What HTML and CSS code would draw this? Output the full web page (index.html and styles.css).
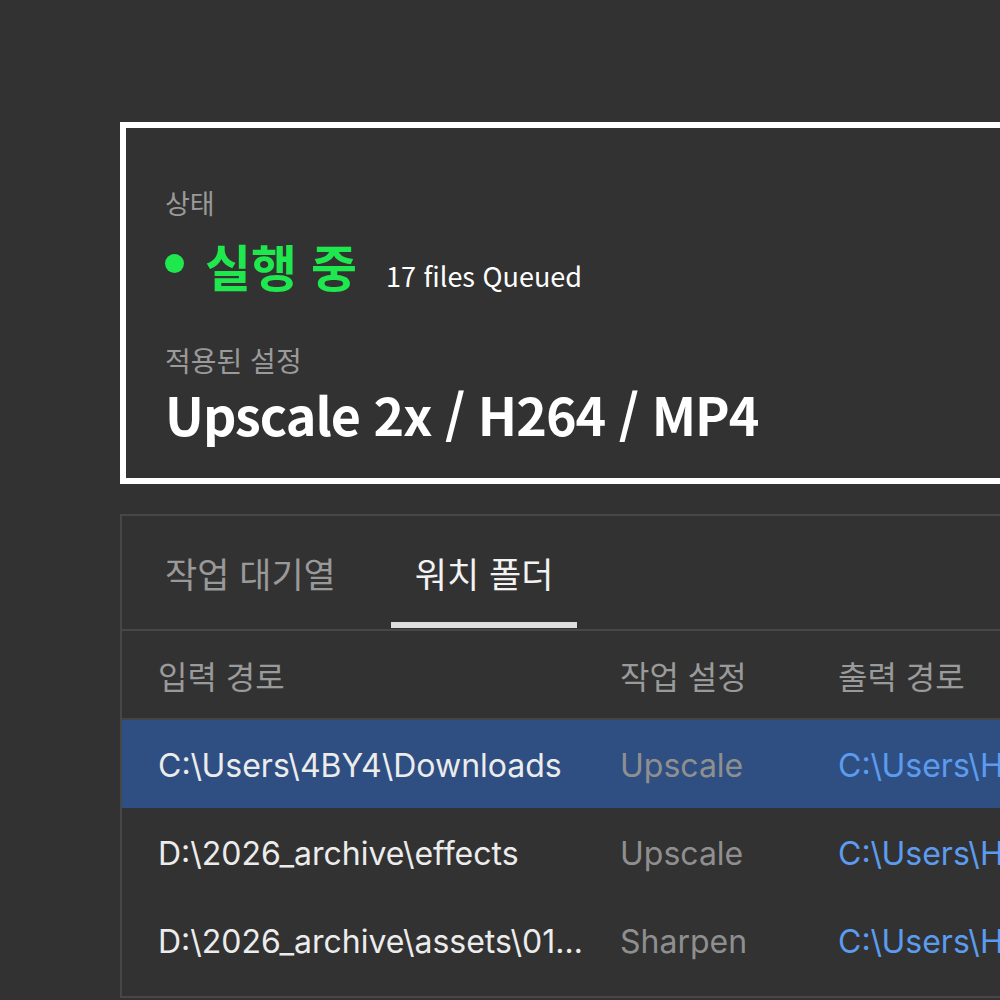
FILE: index.html
```html
<!DOCTYPE html>
<html lang="ko">
<head>
<meta charset="utf-8">
<title>워치 폴더</title>
<link rel="stylesheet" href="styles.css">
</head>
<body>
<main class="page">
  <section class="status-card">
    <div class="label">상태</div>
    <div class="status-line">
      <span class="status-dot"></span>
      <span class="status-text">실행 중</span>
      <span class="queued">17 files Queued</span>
    </div>
    <div class="label label-gap">적용된 설정</div>
    <div class="preset">Upscale 2x / H264 / MP4</div>
  </section>

  <section class="panel">
    <nav class="tabs">
      <div class="tab">작업 대기열</div>
      <div class="tab tab-active">워치 폴더</div>
    </nav>
    <div class="table">
      <div class="row head">
        <div class="cell">입력 경로</div>
        <div class="cell">작업 설정</div>
        <div class="cell">출력 경로</div>
      </div>
      <div class="row selected">
        <div class="cell path">C:\Users\4BY4\Downloads</div>
        <div class="cell op">Upscale</div>
        <div class="cell out">C:\Users\HBY4\Videos\Output</div>
      </div>
      <div class="row">
        <div class="cell path">D:\2026_archive\effects</div>
        <div class="cell op">Upscale</div>
        <div class="cell out">C:\Users\HBY4\Videos\Output</div>
      </div>
      <div class="row">
        <div class="cell path">D:\2026_archive\assets\01_raw_footage</div>
        <div class="cell op">Sharpen</div>
        <div class="cell out">C:\Users\HBY4\Videos\Output</div>
      </div>
    </div>
  </section>
</main>
</body>
</html>
```

FILE: styles.css
```css
html, body {
  margin: 0;
  padding: 0;
  overflow: hidden;
  background: #323232;
}

body {
  width: 1000px;
  height: 1000px;
  font-family: "Noto Sans CJK KR", "Noto Sans", sans-serif;
  color: #ffffff;
}

.page {
  padding: 122px 0 0 120px;
  width: 1100px;
  display: flex;
  flex-direction: column;
  gap: 30px;
}

/* status summary card */
.status-card {
  border: 6px solid #ffffff;
  padding: 60px 0 0 39px;
  box-sizing: border-box;
  height: 362px;
  display: flex;
  flex-direction: column;
}

.label {
  font-size: 27px;
  line-height: 30px;
  color: #9a9a9a;
}

.label-gap {
  font-size: 28px;
  margin-top: 51px;
}

.status-line {
  display: flex;
  align-items: baseline;
  margin-top: 18px;
  height: 58px;
}

.status-dot {
  width: 19px;
  height: 19px;
  border-radius: 50%;
  background: #1fe84e;
  margin-right: 21px;
  align-self: center;
  margin-top: -4px;
}

.status-text {
  font-size: 50px;
  font-weight: 700;
  line-height: 58px;
  color: #1fe84e;
}

.queued {
  font-size: 27px;
  margin-left: 29px;
  color: #ffffff;
}

.preset {
  margin-top: 6px;
  font-size: 52px;
  font-weight: 700;
  line-height: 66px;
  letter-spacing: -1px;
  color: #ffffff;
}

/* tabbed table panel */
.panel {
  border: 2px solid #474747;
  border-right: none;
  height: 484px;
  box-sizing: border-box;
}

.tabs {
  display: flex;
  gap: 31px;
  padding-left: 19px;
  height: 113px;
  border-bottom: 2px solid #474747;
}

.tab {
  display: flex;
  align-items: center;
  padding: 0 24px;
  font-size: 35px;
  color: #999999;
  border-bottom: 6px solid transparent;
  margin-bottom: 1px;
  padding-top: 6px;
}

.tab-active {
  color: #f2f2f2;
  border-bottom-color: #dedede;
}

.row {
  display: grid;
  grid-template-columns: 430px 186px 1fr;
  column-gap: 32px;
  align-items: center;
  padding: 3px 0 0 36px;
  box-sizing: border-box;
  height: 88px;
  font-family: Inter, "Noto Sans CJK KR", sans-serif;
  font-size: 32px;
}

.row.head {
  height: 89px;
  padding-top: 0;
  border-bottom: 2px solid #444444;
  font-family: "Noto Sans CJK KR", sans-serif;
  font-size: 32px;
  color: #9a9a9a;
}

.row.selected {
  background: #2f4f82;
}

.cell {
  white-space: nowrap;
  overflow: hidden;
  text-overflow: ellipsis;
}

.path {
  color: #ececec;
}

.op {
  color: #8f8f8f;
}

.out {
  color: #5b9cf0;
}
```
